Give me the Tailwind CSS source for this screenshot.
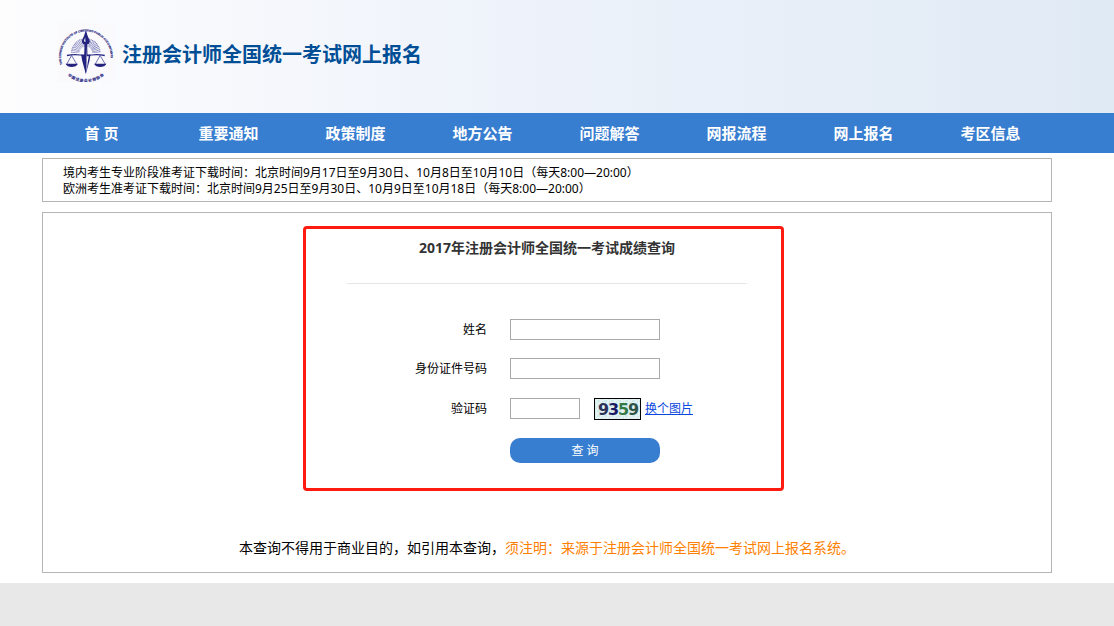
<!DOCTYPE html>
<html lang="zh-CN">
<head>
    <meta charset="UTF-8">
    <meta name="viewport" content="width=device-width, initial-scale=1.0">
    <title>注册会计师全国统一考试网上报名</title>
    <script src="https://cdn.jsdelivr.net/npm/@tailwindcss/browser@4"></script>
</head>
<body class="min-h-screen bg-[#e8e8e8] font-['Noto_Sans','Noto_Sans_CJK_SC',sans-serif] text-xs text-black">

    <!-- Cabecera -->
    <header class="bg-linear-to-r from-[#fdfdfe] via-[#edf2fa] to-[#e0eaf5] pr-5">
        <div class="max-w-[1010px] mx-auto h-[113px] flex items-center">
            <div class="flex items-center gap-1.5 pl-[15px] pb-2">
                <svg class="w-[59px] h-[59px]" viewBox="22 24 178 178" role="img" aria-label="中国注册会计师协会">
                    <rect x="22" y="24" width="178" height="178" fill="#fafafd"/>
                    <path id="arcTop" d="M38 149 A75 75 0 1 1 180 149" fill="none"/>
                    <path id="arcBottom" d="M40 166 A84 84 0 0 0 178 166" fill="none"/>
                    <g fill="#3b3b8c" stroke="#3b3b8c" stroke-width=".6" font-weight="bold">
                        <text font-size="8.5" font-family="Liberation Sans, sans-serif"><textPath href="#arcTop">THE CHINESE INSTITUTE OF CERTIFIED PUBLIC ACCOUNTANTS</textPath></text>
                        <text font-size="11" font-family="Noto Sans CJK SC, sans-serif"><textPath href="#arcBottom" startOffset="50%" text-anchor="middle">中 国 注 册 会 计 师 协 会</textPath></text>
                    </g>
                    <!-- rayos -->
                    <path d="M67 114 A42 42 0 0 1 151 114" fill="none" stroke="#8484bd" stroke-width="5" stroke-dasharray="3 2"/>
                    <path d="M80 114 A29 29 0 0 1 138 114" fill="none" stroke="#8484bd" stroke-width="20" stroke-dasharray="2 2"/>
                    <!-- balanza -->
                    <g fill="none" stroke="#2a2a86" stroke-width="2">
                        <path d="M52 122 Q80 116 109 124 Q138 116 166 122" stroke-width="4"/>
                        <path d="M66 122 L51 149 M66 122 L82 149 M152 122 L137 149 M152 122 L168 149"/>
                    </g>
                    <g fill="#23237f">
                        <path d="M48 147 H85 Q80 157 66 157 Q53 157 48 147Z"/>
                        <path d="M134 147 H171 Q166 157 152 157 Q139 157 134 147Z"/>
                        <path d="M109 45 L114 62 L121 78 Q121 87 113 88 L114 122 L109 178 L104 122 L105 88 Q97 87 97 78 L104 62Z"/>
                        <path d="M95 119 L123 119 L120 138 L109 178 L98 138Z"/>
                    </g>
                    <path d="M107 67 L103 79 L108 81Z M111 90 L111 172 L115 140 L118 124 L112 124Z" fill="#fafafd"/>
                </svg>
                <h1 class="pt-1 text-xl leading-6 font-bold text-[#004f96]">注册会计师全国统一考试网上报名</h1>
            </div>
        </div>
    </header>

    <!-- Menú -->
    <nav class="bg-[#377dd0] pr-[22px]">
        <ul class="max-w-[1016px] mx-auto grid grid-cols-8 text-center text-[15px] leading-10 font-bold text-white">
            <li><a href="#">首 页</a></li>
            <li><a href="#">重要通知</a></li>
            <li><a href="#">政策制度</a></li>
            <li><a href="#">地方公告</a></li>
            <li><a href="#">问题解答</a></li>
            <li><a href="#">网报流程</a></li>
            <li><a href="#">网上报名</a></li>
            <li><a href="#">考区信息</a></li>
        </ul>
    </nav>

    <main class="bg-white pr-5 pt-[5px] pb-2.5">
        <div class="max-w-[1010px] mx-auto flex flex-col gap-2.5">
            <section class="border border-[#b5b5b5] px-5 pt-1.5 pb-1 leading-4">
                <p>境内考生专业阶段准考证下载时间：北京时间9月17日至9月30日、10月8日至10月10日（每天8:00—20:00）</p>
                <p>欧洲考生准考证下载时间：北京时间9月25日至9月30日、10月9日至10月18日（每天8:00—20:00）</p>
            </section>

            <section class="border border-[#b5b5b5] pt-[13px] pb-3.5">
                <div class="flex justify-center pr-[7px]">
                    <form class="w-[481px] border-3 border-[#ff1b0f] rounded-sm pt-[9px] pb-[25px] pl-[41px] pr-[34px]">
                        <h2 class="pb-[25px] border-b border-[#e6e6e6] text-center text-sm leading-5 font-bold text-[#333]">2017年注册会计师全国统一考试成绩查询</h2>

                        <div class="mt-[35px] grid grid-cols-[140px_1fr] gap-x-[23px] gap-y-[18px] items-center">
                            <label for="nombre" class="text-right leading-5">姓名</label>
                            <input type="text" id="nombre" class="w-[150px] h-[21px] border border-[#a9a9a9] bg-white px-1">

                            <label for="documento" class="text-right leading-5">身份证件号码</label>
                            <input type="text" id="documento" class="w-[150px] h-[21px] border border-[#a9a9a9] bg-white px-1">

                            <label for="codigo" class="text-right leading-5">验证码</label>
                            <div class="h-[23px] flex items-center">
                                <input type="text" id="codigo" class="w-[70px] h-[21px] border border-[#a9a9a9] bg-white px-1">
                                <svg class="ml-3.5 w-[47px] h-[22px] shrink-0" viewBox="0 0 47 22" role="img" aria-label="9359">
                                    <defs>
                                        <pattern id="ruido" width="7" height="5" patternUnits="userSpaceOnUse">
                                            <path d="M0 1h2M4 0h1M3 3h3M1 4h1" stroke="#bfe3dc"/>
                                        </pattern>
                                    </defs>
                                    <rect x=".5" y=".5" width="46" height="21" fill="#e6f3f5" stroke="#000"/>
                                    <rect x="1" y="1" width="45" height="20" fill="url(#ruido)"/>
                                    <text x="4" y="17" font-family="DejaVu Sans, sans-serif" font-size="16" font-weight="bold"><tspan x="4" fill="#2d3358">9</tspan><tspan x="14" fill="#1b1a66">3</tspan><tspan x="24" fill="#347a45">5</tspan><tspan x="34" fill="#2f5547">9</tspan></text>
                                </svg>
                                <a href="#" class="ml-1 whitespace-nowrap text-[#0a48e0] underline">换个图片</a>
                            </div>

                            <button type="submit" class="col-start-2 w-[150px] h-[25px] rounded-[10px] bg-[#377dd0] text-white">查 询</button>
                        </div>
                    </form>
                </div>

                <p class="mt-[47px] text-center text-sm leading-5">本查询不得用于商业目的，如引用本查询，<span class="text-[#ff7f00]">须注明：来源于注册会计师全国统一考试网上报名系统。</span></p>
            </section>
        </div>
    </main>

</body>
</html>
